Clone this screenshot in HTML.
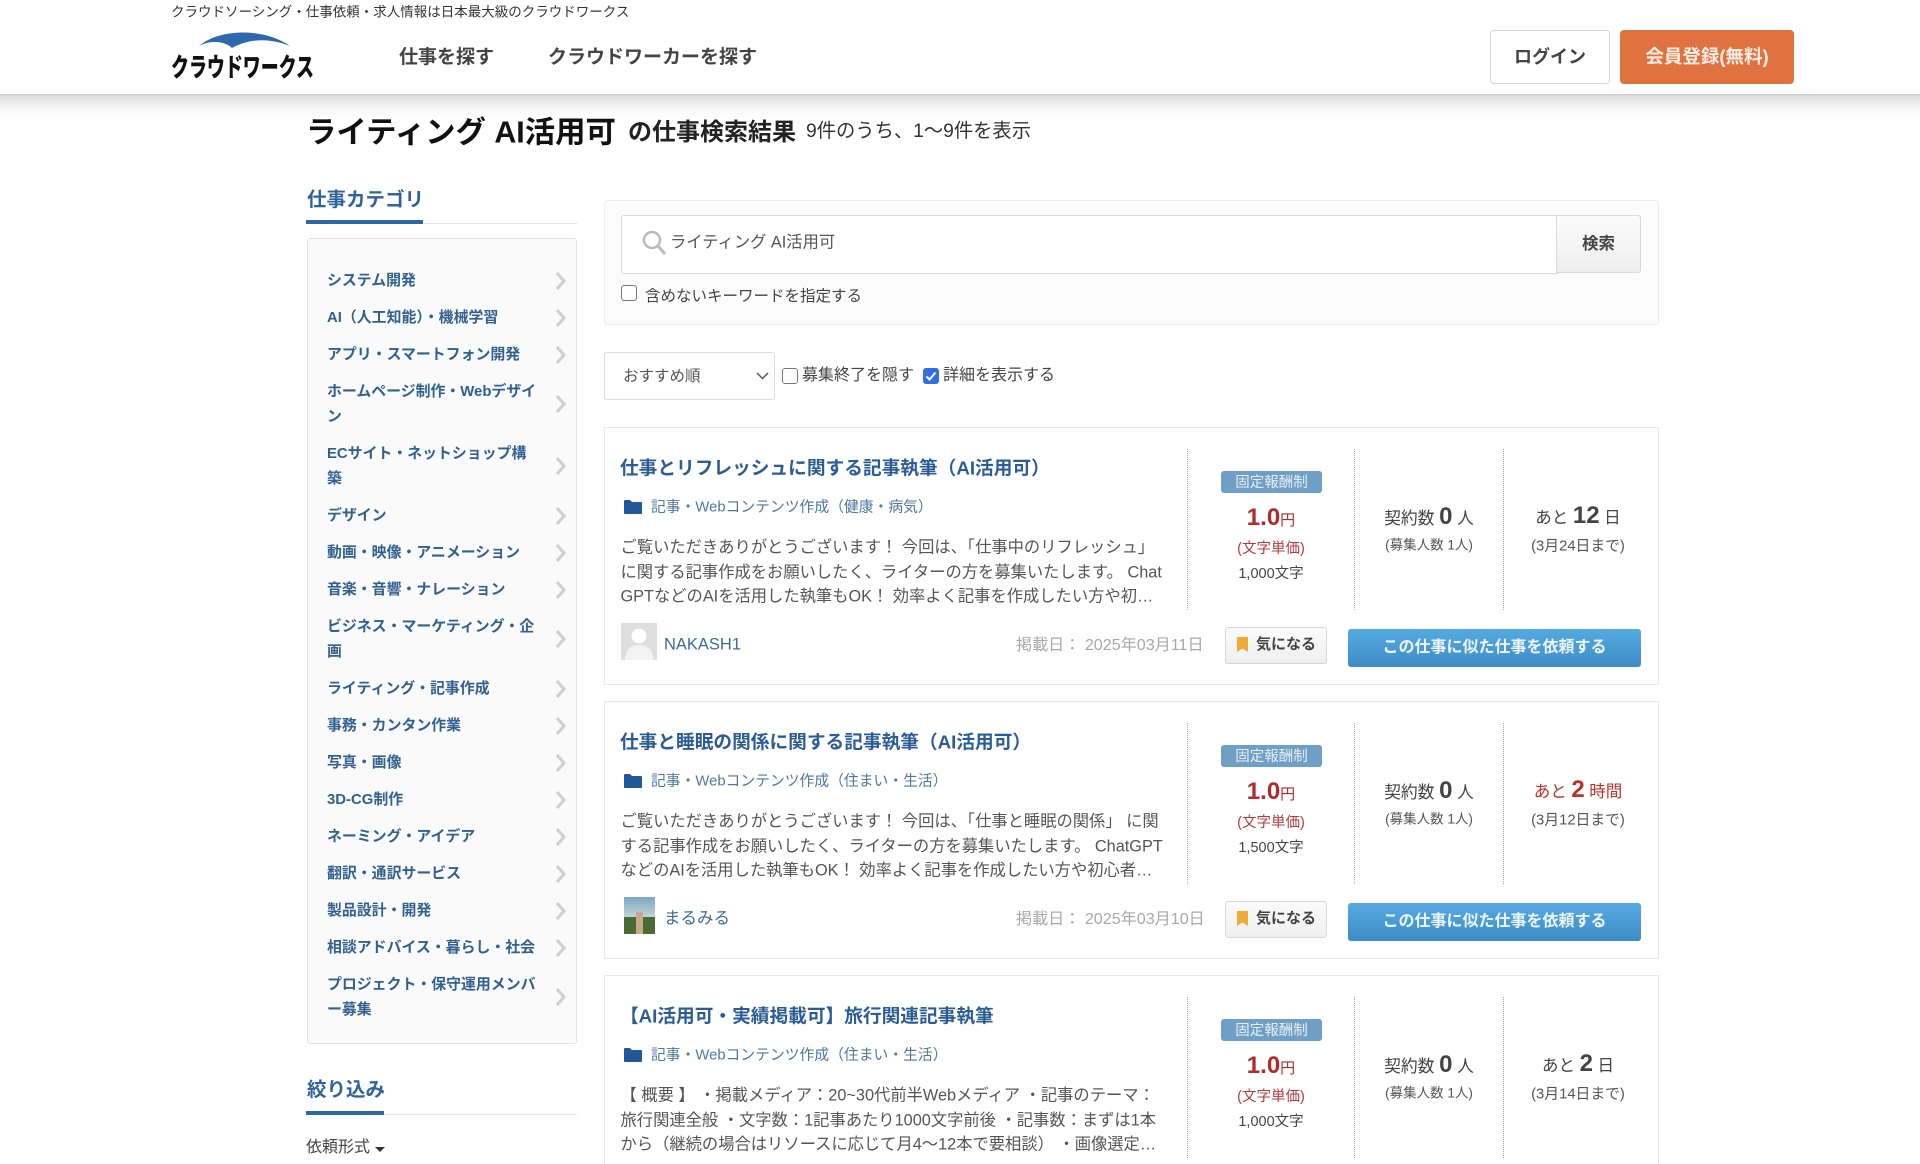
<!DOCTYPE html>
<html lang="ja"><head><meta charset="utf-8"><title>クラウドワークス</title>
<style>
*{box-sizing:border-box}
html,body{margin:0;padding:0;background:#fff;width:1920px;height:1164px;overflow:hidden}
#w{position:relative;width:1920px;height:1164px;overflow:hidden;font-family:"Liberation Sans","Noto Sans CJK JP",sans-serif;color:#333}
.t{position:absolute;white-space:nowrap;transform:translateY(calc(-50% + 1.5px));line-height:1.2}
.c{position:absolute;white-space:nowrap;transform:translate(-50%,calc(-50% + 1.5px));line-height:1.2;text-align:center}
.box{position:absolute}
.card{position:absolute;left:604px;width:1055px;height:258px;border:1px solid #e8e8e8;background:#fff}
.card .in{position:absolute;left:-605px;top:-428px;width:1920px;height:700px}
.vl{position:absolute;top:449px;height:161px;width:0;border-left:1px dotted #aaa}
.title{font-size:18.7px;font-weight:700;color:#2b5c96;left:620px;top:466.500px}
.cat{font-size:14.8px;color:#4e779f;left:651px;top:506.500px}
.folder{position:absolute;left:623px;top:498px}
.d{font-size:16.3px;color:#555;left:620.500px}
.name{font-size:16.5px;color:#3f6a97;left:664px;top:644px}
.date{font-size:16.1px;color:#a8a8a8;left:1016px;top:644px}
.badge{position:absolute;left:1221px;top:471px;width:101px;height:22px;background:#6f9fc4;border-radius:3px;color:#e8f0f6;font-size:14.5px;text-align:center;line-height:24px}
.fav{position:absolute;left:1225px;top:627px;width:102px;height:37px;border:1px solid #d8d8d8;border-radius:3px;background:linear-gradient(#fbfbfb,#efefef);font-size:15px;font-weight:700;color:#444;line-height:34px;padding-left:30px}
.mark{position:absolute;left:11px;top:9px}
.cta{position:absolute;left:1348px;top:629px;width:293px;height:38px;border-radius:3px;background:linear-gradient(#55aae2,#3f8cc5);color:#eef6fc;font-size:16px;font-weight:700;text-align:center;line-height:38px}
.lab{font-size:15.5px;color:#444}
.side{position:absolute;left:307px;top:238px;width:270px;height:806px;background:#fafafa;border:1px solid #e2e2e2;border-radius:3px;padding-top:24px}
.it{position:relative;padding:6px 30px 6px 19px;line-height:25px;font-size:14.9px;font-weight:700;color:#32608f}
.it svg{position:absolute;right:9px;top:50%;margin-top:-10px}
.cb{position:absolute;width:16px;height:16px;border:1.5px solid #767676;border-radius:3px;background:#fff}
</style></head><body><div id="w">

<div class="box" style="left:0;top:95px;width:1920px;height:24px;background:linear-gradient(#dcdcdc,#f6f6f6 55%,#fff)"></div>
<div class="box" style="left:0;top:0;width:1920px;height:95px;background:#fff;border-bottom:1px solid #c9c9c9"></div>

<div class="t" style="left:171px;top:11px;font-size:13.5px;color:#333">クラウドソーシング・仕事依頼・求人情報は日本最大級のクラウドワークス</div>
<svg class="box" style="left:0;top:0" width="330" height="60"><path d="M199 46C220 28 265 28 290 46C270 38 250 38 232 48C225 41 210 40 199 46Z" fill="#2f69ad"/></svg>
<div class="t" style="left:171px;top:68px;font-size:26px;font-weight:900;color:#111;transform:translateY(-50%) scaleX(.69);transform-origin:left center">クラウドワークス</div>
<div class="t" style="left:399px;top:57px;font-size:19px;font-weight:700;color:#444">仕事を探す</div>
<div class="t" style="left:548px;top:57px;font-size:19px;font-weight:700;color:#444">クラウドワーカーを探す</div>
<div class="box" style="left:1490px;top:30px;width:120px;height:54px;border:1px solid #d4d4d4;border-radius:4px;background:#fff;text-align:center;line-height:52px;font-size:18px;font-weight:700;color:#444">ログイン</div>
<div class="box" style="left:1620px;top:30px;width:174px;height:54px;border-radius:4px;background:#e07240;text-align:center;line-height:54px;font-size:18.5px;font-weight:700;color:#fbeee6">会員登録(無料)</div>

<div class="t" style="left:306px;top:131px;font-size:30.400px;font-weight:700;color:#111">ライティング AI活用可</div>
<div class="t" style="left:628px;top:132px;font-size:24px;font-weight:700;color:#222">の仕事検索結果</div>
<div class="t" style="left:806px;top:130px;font-size:19.3px;color:#333">9件のうち、1〜9件を表示</div>

<div class="t" style="left:307px;top:199px;font-size:19.5px;font-weight:700;color:#2f639f">仕事カテゴリ</div>
<div class="box" style="left:306px;top:223px;width:271px;height:1px;background:#e4e4e4"></div>
<div class="box" style="left:306px;top:220px;width:117px;height:4px;background:#2f66a8"></div>

<div class="side">
<div class="it">システム開発<svg width="12" height="18"><path d="M2 1l7 8-7 8" fill="none" stroke="#cfcfcf" stroke-width="3"/></svg></div>
<div class="it">AI（人工知能）・機械学習<svg width="12" height="18"><path d="M2 1l7 8-7 8" fill="none" stroke="#cfcfcf" stroke-width="3"/></svg></div>
<div class="it">アプリ・スマートフォン開発<svg width="12" height="18"><path d="M2 1l7 8-7 8" fill="none" stroke="#cfcfcf" stroke-width="3"/></svg></div>
<div class="it">ホームページ制作・Webデザイ<br>ン<svg width="12" height="18"><path d="M2 1l7 8-7 8" fill="none" stroke="#cfcfcf" stroke-width="3"/></svg></div>
<div class="it">ECサイト・ネットショップ構<br>築<svg width="12" height="18"><path d="M2 1l7 8-7 8" fill="none" stroke="#cfcfcf" stroke-width="3"/></svg></div>
<div class="it">デザイン<svg width="12" height="18"><path d="M2 1l7 8-7 8" fill="none" stroke="#cfcfcf" stroke-width="3"/></svg></div>
<div class="it">動画・映像・アニメーション<svg width="12" height="18"><path d="M2 1l7 8-7 8" fill="none" stroke="#cfcfcf" stroke-width="3"/></svg></div>
<div class="it">音楽・音響・ナレーション<svg width="12" height="18"><path d="M2 1l7 8-7 8" fill="none" stroke="#cfcfcf" stroke-width="3"/></svg></div>
<div class="it">ビジネス・マーケティング・企<br>画<svg width="12" height="18"><path d="M2 1l7 8-7 8" fill="none" stroke="#cfcfcf" stroke-width="3"/></svg></div>
<div class="it">ライティング・記事作成<svg width="12" height="18"><path d="M2 1l7 8-7 8" fill="none" stroke="#cfcfcf" stroke-width="3"/></svg></div>
<div class="it">事務・カンタン作業<svg width="12" height="18"><path d="M2 1l7 8-7 8" fill="none" stroke="#cfcfcf" stroke-width="3"/></svg></div>
<div class="it">写真・画像<svg width="12" height="18"><path d="M2 1l7 8-7 8" fill="none" stroke="#cfcfcf" stroke-width="3"/></svg></div>
<div class="it">3D-CG制作<svg width="12" height="18"><path d="M2 1l7 8-7 8" fill="none" stroke="#cfcfcf" stroke-width="3"/></svg></div>
<div class="it">ネーミング・アイデア<svg width="12" height="18"><path d="M2 1l7 8-7 8" fill="none" stroke="#cfcfcf" stroke-width="3"/></svg></div>
<div class="it">翻訳・通訳サービス<svg width="12" height="18"><path d="M2 1l7 8-7 8" fill="none" stroke="#cfcfcf" stroke-width="3"/></svg></div>
<div class="it">製品設計・開発<svg width="12" height="18"><path d="M2 1l7 8-7 8" fill="none" stroke="#cfcfcf" stroke-width="3"/></svg></div>
<div class="it">相談アドバイス・暮らし・社会<svg width="12" height="18"><path d="M2 1l7 8-7 8" fill="none" stroke="#cfcfcf" stroke-width="3"/></svg></div>
<div class="it">プロジェクト・保守運用メンバ<br>ー募集<svg width="12" height="18"><path d="M2 1l7 8-7 8" fill="none" stroke="#cfcfcf" stroke-width="3"/></svg></div>
</div>

<div class="t" style="left:307px;top:1089px;font-size:19.5px;font-weight:700;color:#2f639f">絞り込み</div>
<div class="box" style="left:306px;top:1114px;width:271px;height:1px;background:#e8e8e8"></div>
<div class="box" style="left:306px;top:1111px;width:78px;height:4px;background:#2f66a8"></div>
<div class="t" style="left:306px;top:1146px;font-size:16px;color:#444">依頼形式</div>
<svg class="box" style="left:375px;top:1147px" width="10" height="5"><path d="M0 0h10L5 5Z" fill="#333"/></svg>

<!-- search -->
<div class="box" style="left:604px;top:200px;width:1055px;height:125px;background:#fbfbfb;border:1px solid #ececec;border-radius:3px"></div>
<div class="box" style="left:621px;top:215px;width:937px;height:59px;background:#fff;border:1px solid #d8d8d8;border-radius:3px 0 0 3px"></div>
<div class="box" style="left:1556px;top:215px;width:85px;height:58px;background:linear-gradient(#fbfbfb,#eeeeee);border:1px solid #d8d8d8;border-radius:0 3px 3px 0;text-align:center;line-height:56px;font-size:16.5px;font-weight:700;color:#444">検索</div>
<svg class="box" style="left:639px;top:228px" width="28" height="28"><circle cx="13" cy="12" r="8" fill="none" stroke="#bbb" stroke-width="2.500"/><path d="M19 18l7 8" stroke="#bbb" stroke-width="3"/></svg>
<div class="t" style="left:670px;top:242px;font-size:16.3px;color:#555">ライティング AI活用可</div>
<div class="cb" style="left:621px;top:285px"></div>
<div class="t lab" style="left:645px;top:296px">含めないキーワードを指定する</div>

<!-- sort -->
<div class="box" style="left:604px;top:352px;width:171px;height:48px;background:#fff;border:1px solid #ddd;border-radius:3px"></div>
<div class="t" style="left:623px;top:376px;font-size:15.5px;color:#555">おすすめ順</div>
<svg class="box" style="left:756px;top:372px" width="13" height="8"><path d="M1 1l5.500 5.500L12 1" fill="none" stroke="#555" stroke-width="1.500"/></svg>
<div class="cb" style="left:782px;top:368px"></div>
<div class="t lab" style="left:802px;top:374px;font-size:16px">募集終了を隠す</div>
<div class="cb" style="left:923px;top:368px;background:#2f6fe0;border-color:#2f6fe0"></div>
<svg class="box" style="left:923px;top:368px" width="16" height="16"><path d="M3.500 8.500l3 3 6-7" fill="none" stroke="#fff" stroke-width="2"/></svg>
<div class="t lab" style="left:943px;top:374px;font-size:16px">詳細を表示する</div>

<!-- card 1 -->
<div class="card" style="top:427px"><div class="in">
<div class="t title">仕事とリフレッシュに関する記事執筆（AI活用可）</div>
<svg class="folder" width="20" height="18"><path d="M1 3q0-1 1-1h5l2 2h9q1 0 1 1v10q0 1-1 1H2q-1 0-1-1Z" fill="#22589a"/></svg>
<div class="t cat">記事・Webコンテンツ作成（健康・病気）</div>
<div class="t d" style="top:547px">ご覧いただきありがとうございます！ 今回は、「仕事中のリフレッシュ」</div>
<div class="t d" style="top:572px">に関する記事作成をお願いしたく、ライターの方を募集いたします。 Chat</div>
<div class="t d" style="top:596px">GPTなどのAIを活用した執筆もOK！ 効率よく記事を作成したい方や初…</div>
<svg class="box" style="left:621px;top:623px" width="36" height="37"><rect width="36" height="37" fill="#dedede"/><circle cx="18" cy="13" r="7.500" fill="#fff"/><path d="M4 37q0-15 14-15t14 15Z" fill="#f3f3f3"/></svg>
<div class="t name">NAKASH1</div>
<div class="t date">掲載日： 2025年03月11日</div>
<div class="vl" style="left:1187px"></div><div class="vl" style="left:1354px"></div><div class="vl" style="left:1503px"></div>
<div class="badge">固定報酬制</div>
<div class="c" style="left:1271px;top:517px;color:#b22a2a;font-size:15px"><b style="font-size:24px">1.0</b>円</div>
<div class="c" style="left:1271px;top:548px;color:#b73a3a;font-size:14.5px">(文字単価)</div>
<div class="c" style="left:1271px;top:573px;color:#444;font-size:14.5px">1,000文字</div>
<div class="c" style="left:1429px;top:516px;color:#444;font-size:16.8px">契約数 <b style="font-size:24px">0</b> 人</div>
<div class="c" style="left:1429px;top:544px;color:#555;font-size:13.5px">(募集人数 1人)</div>
<div class="c" style="left:1578px;top:515px;color:#444;font-size:16.5px">あと <b style="font-size:24px">12</b> 日</div>
<div class="c" style="left:1578px;top:546px;color:#555;font-size:14.8px">(3月24日まで)</div>
<div class="fav"><svg class="mark" width="11" height="15"><path d="M0 0h11v15L5.500 11.500 0 15Z" fill="#efaa38"/></svg>気になる</div>
<div class="cta">この仕事に似た仕事を依頼する</div>
</div></div>

<!-- card 2 -->
<div class="card" style="top:701px"><div class="in">
<div class="t title">仕事と睡眠の関係に関する記事執筆（AI活用可）</div>
<svg class="folder" width="20" height="18"><path d="M1 3q0-1 1-1h5l2 2h9q1 0 1 1v10q0 1-1 1H2q-1 0-1-1Z" fill="#22589a"/></svg>
<div class="t cat">記事・Webコンテンツ作成（住まい・生活）</div>
<div class="t d" style="top:547px">ご覧いただきありがとうございます！ 今回は、「仕事と睡眠の関係」 に関</div>
<div class="t d" style="top:572px">する記事作成をお願いしたく、ライターの方を募集いたします。 ChatGPT</div>
<div class="t d" style="top:596px">などのAIを活用した執筆もOK！ 効率よく記事を作成したい方や初心者…</div>
<svg class="box" style="left:624px;top:623px" width="31" height="37"><defs><linearGradient id="s" x1="0" y1="0" x2="0" y2="1"><stop offset="0" stop-color="#7fa6c4"/><stop offset="1" stop-color="#c9d8d8"/></linearGradient></defs><rect width="31" height="22" fill="url(#s)"/><rect y="20" width="31" height="17" fill="#4c6b32"/><rect x="12" y="15" width="7" height="22" fill="#c9a98c"/></svg>
<div class="t name">まるみる</div>
<div class="t date">掲載日： 2025年03月10日</div>
<div class="vl" style="left:1187px"></div><div class="vl" style="left:1354px"></div><div class="vl" style="left:1503px"></div>
<div class="badge">固定報酬制</div>
<div class="c" style="left:1271px;top:517px;color:#b22a2a;font-size:15px"><b style="font-size:24px">1.0</b>円</div>
<div class="c" style="left:1271px;top:548px;color:#b73a3a;font-size:14.5px">(文字単価)</div>
<div class="c" style="left:1271px;top:573px;color:#444;font-size:14.5px">1,500文字</div>
<div class="c" style="left:1429px;top:516px;color:#444;font-size:16.8px">契約数 <b style="font-size:24px">0</b> 人</div>
<div class="c" style="left:1429px;top:544px;color:#555;font-size:13.5px">(募集人数 1人)</div>
<div class="c" style="left:1578px;top:515px;color:#c0302a;font-size:16.5px">あと <b style="font-size:24px">2</b> 時間</div>
<div class="c" style="left:1578px;top:546px;color:#555;font-size:14.8px">(3月12日まで)</div>
<div class="fav"><svg class="mark" width="11" height="15"><path d="M0 0h11v15L5.500 11.500 0 15Z" fill="#efaa38"/></svg>気になる</div>
<div class="cta">この仕事に似た仕事を依頼する</div>
</div></div>

<!-- card 3 -->
<div class="card" style="top:975px;height:189px;border-bottom:0;overflow:hidden"><div class="in" style="height:616px">
<div class="t title">【AI活用可・実績掲載可】旅行関連記事執筆</div>
<svg class="folder" width="20" height="18"><path d="M1 3q0-1 1-1h5l2 2h9q1 0 1 1v10q0 1-1 1H2q-1 0-1-1Z" fill="#22589a"/></svg>
<div class="t cat">記事・Webコンテンツ作成（住まい・生活）</div>
<div class="t d" style="top:547px">【 概要 】 ・掲載メディア：20~30代前半Webメディア ・記事のテーマ：</div>
<div class="t d" style="top:572px">旅行関連全般 ・文字数：1記事あたり1000文字前後 ・記事数：まずは1本</div>
<div class="t d" style="top:596px">から（継続の場合はリソースに応じて月4〜12本で要相談） ・画像選定…</div>
<div class="vl" style="left:1187px"></div><div class="vl" style="left:1354px"></div><div class="vl" style="left:1503px"></div>
<div class="badge">固定報酬制</div>
<div class="c" style="left:1271px;top:517px;color:#b22a2a;font-size:15px"><b style="font-size:24px">1.0</b>円</div>
<div class="c" style="left:1271px;top:548px;color:#b73a3a;font-size:14.5px">(文字単価)</div>
<div class="c" style="left:1271px;top:573px;color:#444;font-size:14.5px">1,000文字</div>
<div class="c" style="left:1429px;top:516px;color:#444;font-size:16.8px">契約数 <b style="font-size:24px">0</b> 人</div>
<div class="c" style="left:1429px;top:544px;color:#555;font-size:13.5px">(募集人数 1人)</div>
<div class="c" style="left:1578px;top:515px;color:#444;font-size:16.5px">あと <b style="font-size:24px">2</b> 日</div>
<div class="c" style="left:1578px;top:546px;color:#555;font-size:14.8px">(3月14日まで)</div>
</div></div>

</div></body></html>
